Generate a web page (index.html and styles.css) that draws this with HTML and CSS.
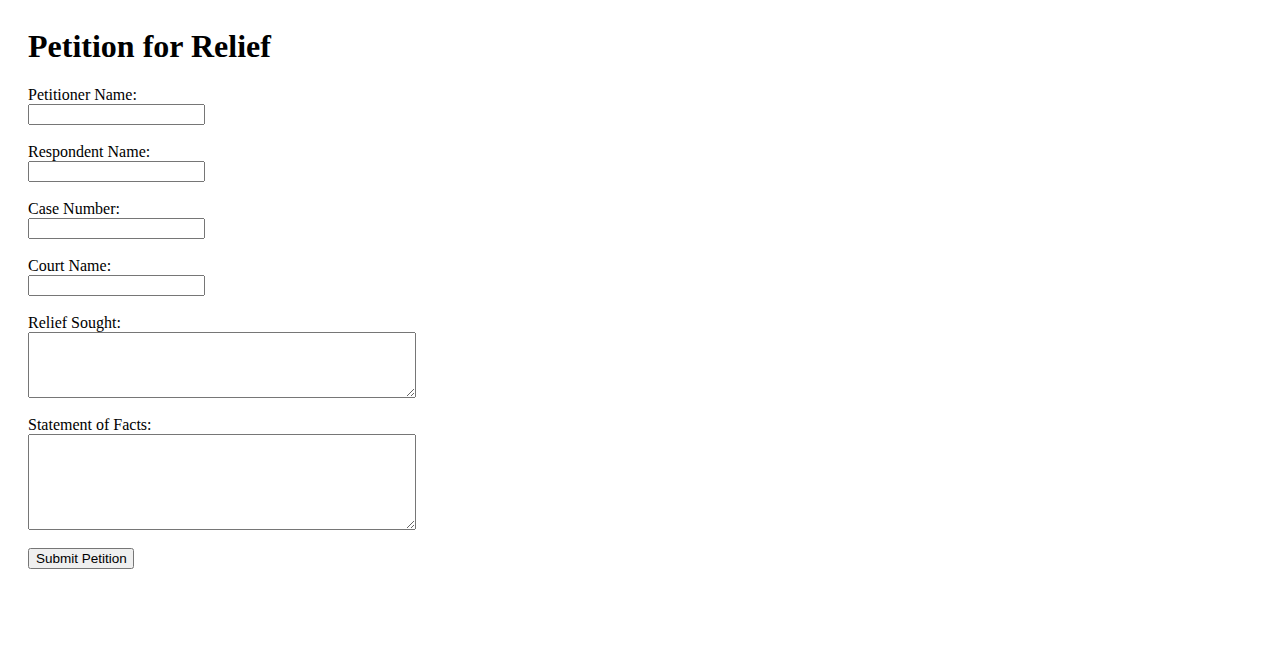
FILE: index.html
```html
<!DOCTYPE html>
<html lang="en">
<head>
    <meta charset="UTF-8">
    <meta name="viewport" content="width=device-width, initial-scale=1.0">
    <title>Petition for Relief</title>
    <link rel="stylesheet" href="styles.css">
</head>
<body>
    <h1>Petition for Relief</h1>

    <form class="petition-form">
        <div class="field">
            <label for="petitioner">Petitioner Name:</label>
            <input type="text" id="petitioner" name="petitioner">
        </div>
        <div class="field">
            <label for="respondent">Respondent Name:</label>
            <input type="text" id="respondent" name="respondent">
        </div>
        <div class="field">
            <label for="case-number">Case Number:</label>
            <input type="text" id="case-number" name="case-number">
        </div>
        <div class="field">
            <label for="court">Court Name:</label>
            <input type="text" id="court" name="court">
        </div>
        <div class="field">
            <label for="relief">Relief Sought:</label>
            <textarea id="relief" name="relief" class="short"></textarea>
        </div>
        <div class="field">
            <label for="facts">Statement of Facts:</label>
            <textarea id="facts" name="facts" class="tall"></textarea>
        </div>
        <button type="submit">Submit Petition</button>
    </form>
</body>
</html>
```

FILE: styles.css
```css
body {
    font-family: "Liberation Serif", "Times New Roman", serif;
    font-size: 16px;
    margin: 0;
    padding: 28px;
    color: #000;
    background: #fff;
}

h1 {
    font-size: 32px;
    font-weight: bold;
    margin: 0 0 21px 0;
}

.field {
    margin-bottom: 18px;
}

label {
    display: block;
}

input[type="text"] {
    display: block;
    box-sizing: border-box;
    width: 177px;
    height: 21px;
    margin: 0;
    font-family: "Liberation Sans", Arial, sans-serif;
    font-size: 13.33px;
}

textarea {
    display: block;
    box-sizing: border-box;
    width: 388px;
    margin: 0;
    font-family: "Liberation Mono", monospace;
    font-size: 13.33px;
}

textarea.short {
    height: 66px;
}

textarea.tall {
    height: 96px;
}

button {
    display: block;
    box-sizing: border-box;
    width: 106px;
    height: 21px;
    margin: 0;
    padding: 1px 6px;
    white-space: nowrap;
    font-family: "Liberation Sans", Arial, sans-serif;
    font-size: 13.5px;
}
```
